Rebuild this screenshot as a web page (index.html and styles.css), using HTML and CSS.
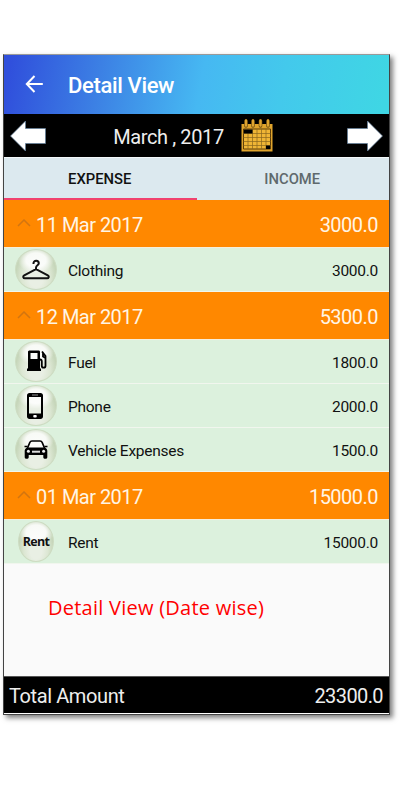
FILE: index.html
```html
<!DOCTYPE html>
<html lang="en">
<head>
  <meta charset="UTF-8">
  <meta name="viewport" content="width=device-width, initial-scale=1">
  <title>Detail View</title>
  <link rel="stylesheet" href="styles.css">
</head>
<body>

  <div class="screen">
    <div class="header">
      <svg class="back" width="18" height="18" viewBox="0 0 18 18"><path d="M9.500 1L1.800 9l7.700 8M1.800 9h16" fill="none" stroke="#fff" stroke-width="2"/></svg>
      <div class="title">Detail View</div>
    </div>

    <div class="month-bar">
      <svg width="36" height="32" viewBox="0 0 36 32"><path d="M.5 16L15.500 1v7.500H35.500v15H15.500V31z" fill="#fff" stroke="#5f7d99" stroke-width=".7"/></svg>
      <div class="month">
        <span class="month-name">March , 2017</span>
        <svg width="32" height="33" viewBox="0 0 32 33">
          <path d="M.5 5h31v27.500H.5z" fill="#e0a42c"/>
          <path d="M2.500 10h27v20h-27z" fill="#efb535" stroke="#5b3d08" stroke-width="1"/>
          <path d="M7 10v20M11.500 10v20M16 10v20M20.500 10v20M25 10v20M2.500 14.500h27M2.500 18.500h27M2.500 22.500h27M2.500 26.500h27" stroke="#8a661c" stroke-width=".7"/>
          <path d="M3 10.500h8.500v4H3zM25 26.500h4v3.500h-4z" fill="#000"/>
          <path d="M5 2v5M12 2v5M19.500 2v5M27 2v5" stroke="#6b4b10" stroke-width="3.600" stroke-linecap="round"/>
          <path d="M5 1.500v5M12 1.500v5M19.500 1.500v5M27 1.500v5" stroke="#dfa42f" stroke-width="2.400" stroke-linecap="round"/>
        </svg>
      </div>
      <svg width="36" height="32" viewBox="0 0 36 32"><path d="M35.500 16L20.500 1v7.500H.5v15h20V31z" fill="#fff" stroke="#5f7d99" stroke-width=".7"/></svg>
    </div>

    <div class="tabs">
      <div class="tab active">EXPENSE</div>
      <div class="tab">INCOME</div>
    </div>

    <div class="date-row">
      <svg class="caret" width="14" height="8" viewBox="0 0 14 8"><path d="M1 7l6-6 6 6"/></svg>
      <span class="date">11 Mar 2017</span>
      <span>3000.0</span>
    </div>
    <div class="item">
      <div class="icon">
        <svg width="28" height="22" viewBox="0 0 28 22"><path d="M11.500 5c-.2-2 1-3.300 2.700-3.300 1.500 0 2.600 1 2.600 2.500 0 2.100-2.800 2-2.800 4.500v1.500L2.200 16.300c-1.600.9-1 3 .7 3h22.200c1.700 0 2.300-2.100.7-3L14 10.200" fill="none" stroke="#111" stroke-width="2"/></svg>
      </div>
      <span class="name">Clothing</span>
      <span>3000.0</span>
    </div>

    <div class="date-row">
      <svg class="caret" width="14" height="8" viewBox="0 0 14 8"><path d="M1 7l6-6 6 6"/></svg>
      <span class="date">12 Mar 2017</span>
      <span>5300.0</span>
    </div>
    <div class="item">
      <div class="icon">
        <svg class="fuel" width="20" height="21" viewBox="0 0 20 21">
          <path d="M3 .5h8.500c1 0 1.500.5 1.500 1.500v16.500h1V21H0v-2.500h1V2C1 1 1.500.5 3 .5zM3.500 3v6h7V3z" fill="#000" fill-rule="evenodd"/>
          <path d="M13 9.500c1.500 0 1.800.8 1.800 2v4.500c0 2.200 3.700 2.200 3.700 0V6L15 1.500M16 3v3.500l2.500 1.500" fill="none" stroke="#000" stroke-width="1.800"/>
        </svg>
      </div>
      <span class="name">Fuel</span>
      <span>1800.0</span>
    </div>
    <div class="item">
      <div class="icon">
        <svg class="phone" width="16" height="26" viewBox="0 0 16 26">
          <path d="M2.500 0h11C15 0 16 1 16 2.500v21c0 1.500-1 2.500-2.500 2.500h-11C1 26 0 25 0 23.500v-21C0 1 1 0 2.500 0zM2 4v16.500h12V4z" fill="#000" fill-rule="evenodd"/>
          <path d="M5 2h6" stroke="#bbb" stroke-width=".8"/>
          <rect x="6.300" y="22" width="3.400" height="2.500" rx=".8" fill="#fff"/>
        </svg>
      </div>
      <span class="name">Phone</span>
      <span>2000.0</span>
    </div>
    <div class="item">
      <div class="icon">
        <svg class="car" width="24" height="19" viewBox="0 0 24 19">
          <path d="M3.500 8l2.300-5.500C6.200 1.500 6.800 1 8 1h8c1.200 0 1.800.5 2.200 1.500L20.500 8" fill="none" stroke="#000" stroke-width="1.700"/>
          <path d="M3 7.500h18c1.500 1 2.300 2 2.300 3.500v4v2.200c0 2.200-4 2.200-4 0V15H4.700v2.200c0 2.200-4 2.200-4 0V11c0-1.500.8-2.500 2.300-3.500z" fill="#000"/>
          <path d="M.5 6.500h3M20.500 6.500h3" stroke="#000" stroke-width="1.500"/>
          <path d="M8 11.700h8" stroke="#ddd" stroke-width="2"/>
          <circle cx="4.400" cy="11.300" r="1.500" fill="#eee"/>
          <circle cx="19.600" cy="11.300" r="1.500" fill="#eee"/>
        </svg>
      </div>
      <span class="name">Vehicle Expenses</span>
      <span>1500.0</span>
    </div>

    <div class="date-row">
      <svg class="caret" width="14" height="8" viewBox="0 0 14 8"><path d="M1 7l6-6 6 6"/></svg>
      <span class="date">01 Mar 2017</span>
      <span>15000.0</span>
    </div>
    <div class="item">
      <div class="icon narrow">Rent</div>
      <span class="name">Rent</span>
      <span>15000.0</span>
    </div>

    <div class="note">Detail View (Date wise)</div>

    <div class="total">
      <span>Total Amount</span>
      <span class="sum">23300.0</span>
    </div>
  </div>

</body>
</html>
```
FILE: styles.css
```css
* {
  box-sizing: border-box;
}
body {
  margin: 0;
  min-height: 100vh;
  padding: 54px 0 0 3px;
  background: #fff;
  font-family: Roboto, sans-serif;
  color: #111;
}
svg {
  display: block;
  flex-shrink: 0;
}
.screen {
  display: flex;
  flex-direction: column;
  width: 387px;
  height: 661px;
  border: 1px solid #444;
  border-top-color: #999;
  background: #fafafa;
  box-shadow: 3px 3px 5px rgba(0, 0, 0, 0.5);
}
.header {
  display: flex;
  align-items: center;
  height: 59px;
  padding: 0 21px;
  background: linear-gradient(100deg, #3050dc 2%, #3c80e4 25%, #46b8f2 51%, #43c9ec 72%, #3fd6e4 98%);
  color: #fff;
}
.back {
  margin-bottom: 2px;
}
.title {
  margin-left: 25px;
  padding-top: 1px;
  font-size: 22px;
  font-weight: 500;
  letter-spacing: -0.35px;
}
.month-bar {
  display: flex;
  align-items: center;
  justify-content: space-between;
  height: 43px;
  padding: 0 6px;
  background: #000;
  color: #eee;
}
.month {
  display: flex;
  align-items: center;
  gap: 17px;
  margin-right: 7px;
  font-size: 20px;
  letter-spacing: -0.4px;
}
.month-name {
  padding-top: 2px;
}
.tabs {
  display: flex;
  height: 43px;
  background: #dce9ef;
  border-top: 1px solid #f3f8fa;
}
.tab {
  flex: 1;
  padding: 3px 1px 0 0;
  border-bottom: 2px solid transparent;
  font-size: 14.8px;
  font-weight: 500;
  line-height: 37px;
  text-align: center;
  color: #5f696d;
}
.tab.active {
  color: #111;
  border-bottom-color: #f0426f;
}
.date-row {
  display: flex;
  align-items: center;
  height: 48px;
  padding: 3px 11px 0 13px;
  background: #ff8800;
  border-bottom: 1px solid #f6eedb;
  font-size: 20px;
  letter-spacing: -0.52px;
  color: #fff5e5;
}
.caret {
  margin: 0 5px 4px 0;
  fill: none;
  stroke: #d27510;
  stroke-width: 1.5;
}
.date {
  flex: 1;
}
.item {
  display: flex;
  align-items: center;
  height: 44px;
  padding: 0 11px;
  background: #dcf1dd;
  border-bottom: 1px solid #f1f6ee;
  font-size: 15.5px;
  letter-spacing: -0.27px;
}
.item span {
  padding-top: 2px;
}
.icon {
  display: flex;
  align-items: center;
  justify-content: center;
  width: 42px;
  height: 41px;
  border-radius: 50%;
  border: 1px solid #cddcc2;
  background:
    radial-gradient(ellipse 18px 13px at 50% 26%, rgba(255, 255, 255, 0.85) 55%, transparent 100%),
    radial-gradient(ellipse at 50% 70%, #e9efe4 25%, #dce7d3 50%, #c6d6ba 72%);
}
.fuel {
  margin: 0 0 2px 2px;
}
.phone {
  margin-right: 2px;
}
.car {
  margin-right: 1px;
}
.icon.narrow {
  width: 36px;
  margin: 0 3px;
  font-family: "Open Sans", sans-serif;
  font-size: 12.5px;
  font-weight: bold;
  letter-spacing: -0.7px;
}
.name {
  flex: 1;
  margin-left: 11px;
}
.note {
  flex: 1;
  padding: 30px 0 0 44px;
  font-family: "Open Sans", sans-serif;
  font-size: 20px;
  letter-spacing: 0.25px;
  color: #f00;
}
.total {
  display: flex;
  align-items: center;
  justify-content: space-between;
  height: 38px;
  padding: 2px 6px 0 5px;
  background: #000;
  border-top: 1px solid #555;
  border-bottom: 1px solid #fff;
  font-size: 20px;
  letter-spacing: -0.4px;
  color: #eee;
}
.sum {
  letter-spacing: -0.6px;
}
```
